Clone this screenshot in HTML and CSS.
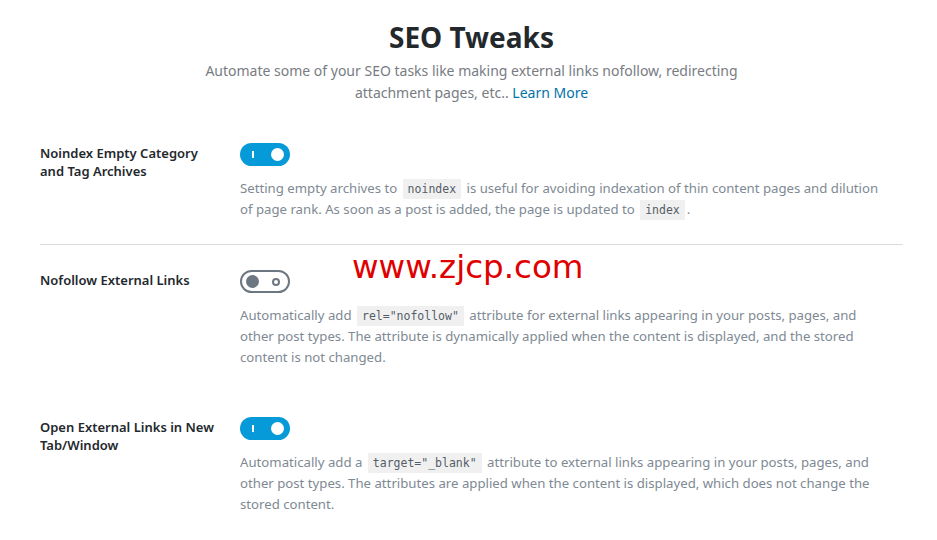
FILE: index.html
```html
<!DOCTYPE html>
<html lang="en">
<head>
  <meta charset="UTF-8" />
  <meta name="viewport" content="width=device-width, initial-scale=1.0"/>
  <title>SEO Tweaks</title>
  <link rel="stylesheet" href="styles.css">
</head>
<body>
  <div class="page">
    <header class="intro">
      <h1>SEO Tweaks</h1>
      <p>Automate some of your SEO tasks like making external links nofollow, redirecting attachment pages, etc.. <a href="#">Learn More</a></p>
    </header>

    <div class="setting bordered">
      <div class="label">Noindex Empty Category and Tag Archives</div>
      <div class="content">
        <span class="toggle on"><span class="bar"></span><span class="knob"></span></span>
        <p class="desc">Setting empty archives to <code>noindex</code> is useful for avoiding indexation of thin content pages and dilution of page rank. As soon as a post is added, the page is updated to <code>index</code>.</p>
      </div>
    </div>

    <div class="setting">
      <div class="label">Nofollow External Links</div>
      <div class="content">
        <span class="toggle off"><span class="knob"></span><span class="ring"></span></span>
        <p class="desc">Automatically add <code>rel="nofollow"</code> attribute for external links appearing in your posts, pages, and other post types. The attribute is dynamically applied when the content is displayed, and the stored content is not changed.</p>
      </div>
    </div>

    <div class="setting">
      <div class="label">Open External Links in New Tab/Window</div>
      <div class="content">
        <span class="toggle on"><span class="bar"></span><span class="knob"></span></span>
        <p class="desc">Automatically add a <code>target="_blank"</code> attribute to external links appearing in your posts, pages, and other post types. The attributes are applied when the content is displayed, which does not change the stored content.</p>
      </div>
    </div>

    <div class="watermark">www.zjcp.com</div>
  </div>
</body>
</html>
```

FILE: styles.css
```css
body {
  margin: 0;
  background: #fff;
  font-family: 'Noto Sans', sans-serif;
  color: #23282d;
}

.page {
  position: relative;
  padding: 0 34px 0 40px;
}

.intro {
  text-align: center;
  padding-top: 18px;
  margin-bottom: 14px;
}

.intro h1 {
  margin: 0 0 4px;
  font-size: 28px;
  line-height: 38px;
  font-weight: 700;
}

.intro p {
  margin: 0 auto;
  max-width: 550px;
  font-size: 14px;
  line-height: 22px;
  color: #787c82;
}

.intro a {
  color: #0073aa;
  text-decoration: none;
}

.setting {
  display: flex;
  padding: 25px 0 24px;
}

.setting.bordered {
  border-bottom: 1px solid #dcdcde;
}

.label {
  width: 178px;
  flex-shrink: 0;
  padding-right: 22px;
  font-size: 13px;
  line-height: 18px;
  font-weight: 600;
  padding-top: 1px;
}

.content {
  flex: 1;
  max-width: 645px;
}

.toggle {
  position: relative;
  display: block;
  width: 50px;
  height: 23px;
  border-radius: 12px;
  box-sizing: border-box;
  margin-bottom: 12px;
}

.toggle.on {
  background: #079ad9;
}

.toggle.off {
  border: 2px solid #6c7781;
}

.toggle .bar {
  position: absolute;
  left: 12px;
  top: 8px;
  width: 2px;
  height: 7px;
  background: #fff;
}

.toggle.on .knob {
  position: absolute;
  right: 6px;
  top: 5px;
  width: 13px;
  height: 13px;
  border-radius: 50%;
  background: #fff;
}

.toggle.off .knob {
  position: absolute;
  left: 4px;
  top: 3px;
  width: 13px;
  height: 13px;
  border-radius: 50%;
  background: #6c7781;
}

.toggle .ring {
  position: absolute;
  right: 8px;
  top: 6px;
  width: 4px;
  height: 4px;
  border: 2px solid #6c7781;
  border-radius: 50%;
}

.desc {
  margin: 0;
  font-size: 13.2px;
  line-height: 21px;
  color: #7e8993;
}

code {
  font-family: 'DejaVu Sans Mono', monospace;
  font-size: 11.5px;
  line-height: 1;
  background: #f0f0f1;
  color: #555d66;
  padding: 3px 5px;
  margin: 0 2px;
}

.watermark {
  position: absolute;
  left: 352px;
  top: 247px;
  font-family: 'DejaVu Sans', sans-serif;
  font-size: 32.5px;
  line-height: 40px;
  color: #e00000;
}
```
